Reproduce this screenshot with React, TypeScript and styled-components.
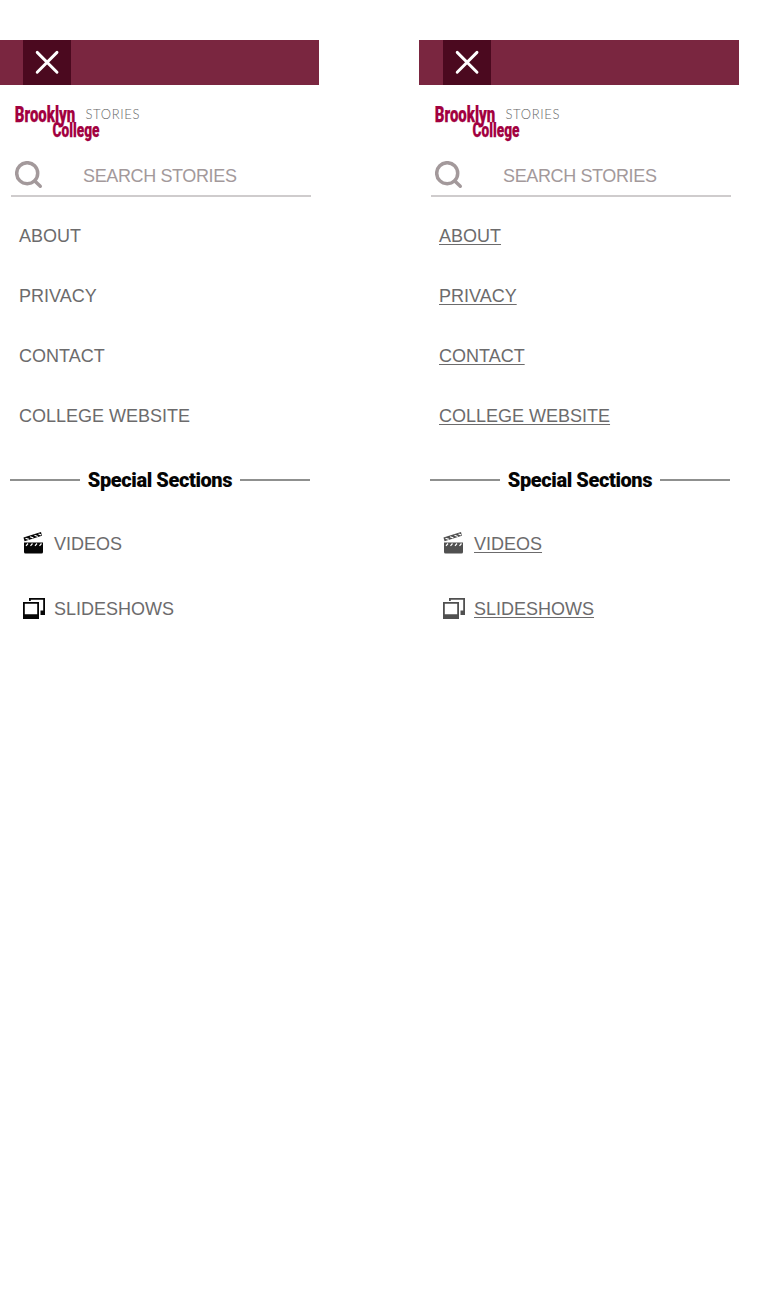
import React from 'react';
import styled, { createGlobalStyle } from 'styled-components';

const GlobalStyle = createGlobalStyle`
  body { margin: 0; background: #fff; overflow-x: hidden; }
  * { box-sizing: border-box; }
`;

const Page = styled.main`
  display: flex;
  gap: 100px;
  min-height: 1299px;
  margin-left: -1px;
  padding-top: 40px;
  font-family: 'Liberation Sans', Arial, sans-serif;
`;

const Panel = styled.section`
  flex: 0 0 320px;
  display: flex;
  flex-direction: column;
`;

const TopBar = styled.header`
  height: 45px;
  padding-left: 24px;
  background: #7a2640;
`;

const CloseButton = styled.button`
  display: block;
  width: 48px;
  height: 45px;
  padding: 0;
  border: 0;
  background: #4b091f;
  svg { display: block; }
`;

const Brand = styled.div`
  height: 66px;
  padding: 16px 0 0 14px;
  svg { display: block; }
`;

const SearchBox = styled.div`
  display: flex;
  align-items: center;
  width: 300px;
  height: 46px;
  margin-left: 11.5px;
  padding-top: 5px;
  border-bottom: 2px solid #cfcccd;
  color: #a3999b;
  svg { display: block; flex: none; margin: 0 0 0 4.5px; }
`;

const SearchLabel = styled.span`
  margin-left: 39px;
  font-size: 18px;
  line-height: 20px;
  letter-spacing: -0.37px;
  white-space: nowrap;
`;

const Nav = styled.nav`
  display: flex;
  flex-direction: column;
  padding: 9px 0 0 20px;
`;

const NavLink = styled.a<{ $hover: boolean }>`
  height: 60px;
  line-height: 60px;
  font-size: 18px;
  color: #6c6b6c;
  text-decoration: ${(p) => (p.$hover ? 'underline' : 'none')};
  text-decoration-thickness: 1px;
  text-underline-offset: 2px;
`;

const SectionHeading = styled.h2`
  display: flex;
  align-items: center;
  justify-content: space-between;
  width: 300px;
  height: 24px;
  margin: 22px 0 0 11px;
  font: 900 20px/24px Roboto, sans-serif;
  letter-spacing: -0.4px;
  color: #050505;
  white-space: nowrap;
`;

const Rule = styled.span`
  width: 70px;
  height: 2px;
  background: #8f908f;
`;

const Sections = styled.div`
  display: flex;
  flex-direction: column;
  padding: 19px 0 0 23px;
`;

const SectionRow = styled.div<{ $hover: boolean }>`
  display: flex;
  align-items: center;
  gap: 8px;
  height: 65px;
  svg { display: block; margin-top: -2px; color: ${(p) => (p.$hover ? '#505050' : '#050505')}; }
`;

const CloseIcon = () => (
  <svg width="48" height="45" viewBox="0 0 48 45" fill="none" stroke="#fff" strokeWidth="2.9" strokeLinecap="round">
    <path d="M14.2 12.4 34 32.2M34 12.4 14.2 32.2" />
  </svg>
);

const Logo = () => (
  <svg width="130" height="44" viewBox="0 0 130 44">
    <g fill="#a2003f" stroke="#a2003f" strokeWidth="0.25" fontFamily="Roboto, sans-serif" fontWeight="900">
      <text x="1.8" y="20.5" fontSize="22" textLength="60.500" lengthAdjust="spacingAndGlyphs">Brooklyn</text>
      <text x="39.5" y="35.5" fontSize="20" textLength="47" lengthAdjust="spacingAndGlyphs">College</text>
    </g>
    <text x="72.5" y="18.3" fill="#666" fontFamily="Lato, sans-serif" fontWeight="300" fontSize="13" textLength="54" lengthAdjust="spacing">STORIES</text>
  </svg>
);

const SearchIcon = () => (
  <svg width="29" height="29" viewBox="0 0 29 29" fill="none" stroke="currentColor">
    <circle cx="12.2" cy="12.2" r="10.5" strokeWidth="3.5" />
    <path d="m19.8 20 5.500 5.300" strokeWidth="3.4" strokeLinecap="round" />
  </svg>
);

const VideoIcon = () => (
  <svg width="24" height="24" viewBox="0 0 24 24" fill="currentColor">
    <path d="M2 11.5h19V21q0 1.5-1.5 1.5h-16Q2 22.500 2 21Z" />
    <path d="M1.500 6.500 19 1l.9 3.700-17.400 5.500Z" />
    <path d="m3.500 7.200 3.300 1.200M8 5.700l3.300 1.200M12.500 4.300l3.300 1.200M16.500 3l2.500.9M4 14.800l2-2.300M8.500 14.800l2-2.300M13 14.800l2-2.300M17.500 14.800l2-2.300" fill="none" stroke="#fff" strokeWidth="1.200" />
  </svg>
);

const SlidesIcon = () => (
  <svg width="24" height="24" viewBox="0 0 24 24" fill="currentColor">
    <path fillRule="evenodd" d="M1 6h16v17H1Zm1.800 1.800v10.400h12.400V7.800Z" />
    <path d="M7 5V2h16v17h-4.500v-4.500h2.700V3.800H8.800V5Z" />
  </svg>
);

const navigation = ['ABOUT', 'PRIVACY', 'CONTACT', 'COLLEGE WEBSITE'];
const sections = [
  { label: 'VIDEOS', Icon: VideoIcon },
  { label: 'SLIDESHOWS', Icon: SlidesIcon },
];

function Menu({ hover = false }: { hover?: boolean }) {
  return (
    <Panel>
      <TopBar><CloseButton aria-label="Close"><CloseIcon /></CloseButton></TopBar>
      <Brand><Logo /></Brand>
      <SearchBox><SearchIcon /><SearchLabel>SEARCH STORIES</SearchLabel></SearchBox>
      <Nav>
        {navigation.map((label) => <NavLink key={label} $hover={hover}>{label}</NavLink>)}
      </Nav>
      <SectionHeading><Rule />Special Sections<Rule /></SectionHeading>
      <Sections>
        {sections.map(({ label, Icon }) => (
          <SectionRow key={label} $hover={hover}><Icon /><NavLink $hover={hover}>{label}</NavLink></SectionRow>
        ))}
      </Sections>
    </Panel>
  );
}

export default function App() {
  return (
    <>
      <GlobalStyle />
      <Page><Menu /><Menu hover /></Page>
    </>
  );
}
